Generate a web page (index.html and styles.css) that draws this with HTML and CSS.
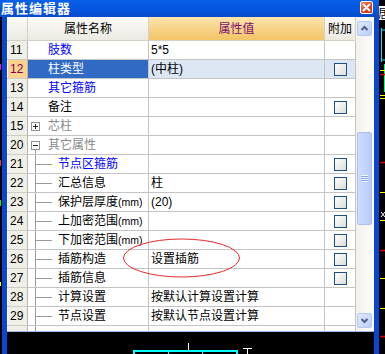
FILE: index.html
```html
<!DOCTYPE html>
<html lang="zh">
<head>
<meta charset="utf-8">
<title>属性编辑器</title>
<link rel="stylesheet" href="styles.css">
</head>
<body>
<div class="screen">
  <svg class="cad" width="385" height="354" viewBox="0 0 385 354">
    <rect x="379" y="6" width="6" height="14" fill="#fff"/>
    <text x="378" y="18" font-size="12" font-family="Noto Sans CJK SC, sans-serif" fill="#000">居</text>
    <path d="M381.5 28 V62 M381.5 30 H385 M381.5 60 H385" stroke="#00e0ff" stroke-width="1" fill="none"/>
    <path d="M384.5 64 V92" stroke="#00ff80" stroke-width="1"/>
    <path d="M380 70.5 H385 M380 95.5 H385 M380 98.5 H385 M380 192.5 H385 M380 220.5 H385 M380 278.5 H385 M380 308.5 H385" stroke="#ffff00" stroke-width="1"/>
    <path d="M380 74.5 H385 M380 162.5 H385 M380 250.5 H385 M380 336.5 H385" stroke="#e00000" stroke-width="1.5"/>
    <path d="M381 212 L385 217 M385 212 L381 217" stroke="#fff" stroke-width="1"/>
    <path d="M0.5 64 V70" stroke="#ff00ff" stroke-width="1"/>
    <path d="M0.5 160 V166" stroke="#ff3030" stroke-width="1"/>
    <path d="M0.5 200 V206" stroke="#00ff00" stroke-width="1"/>
    <path d="M0.5 282 V286" stroke="#ffff00" stroke-width="1"/>
    <path d="M188.5 343 V350" stroke="#fff" stroke-width="1"/>
    <rect x="134" y="351" width="103" height="8" fill="none" stroke="#00ffff" stroke-width="2"/>
    <path d="M168.5 351 V354 M202.5 351 V354" stroke="#00ffff" stroke-width="1"/>
    <path d="M243 348.5 H252 M247.5 348 V354" stroke="#fff" stroke-width="1"/>
  </svg>

  <div class="win">
    <div class="title">
      <span class="title-text">属性编辑器</span>
      <span class="close">
        <svg width="13" height="13" viewBox="0 0 13 13"><path d="M3.5 3.5 L9.5 9.5 M9.5 3.5 L3.5 9.5" stroke="#fff" stroke-width="2" stroke-linecap="round"/></svg>
      </span>
    </div>
    <div class="frame">
      <div class="content">
        <div class="grid">
          <div class="row head">
            <div class="cell num"></div>
            <div class="cell name">属性名称</div>
            <div class="cell val">属性值</div>
            <div class="cell ext">附加</div>
          </div>

          <div class="row">
            <div class="cell num">11</div>
            <div class="cell name blue">肢数</div>
            <div class="cell val">5*5</div>
            <div class="cell ext"></div>
          </div>
          <div class="row sel">
            <div class="cell num">12</div>
            <div class="cell name">柱类型</div>
            <div class="cell val">(中柱)</div>
            <div class="cell ext"><span class="cb"></span></div>
          </div>
          <div class="row">
            <div class="cell num">13</div>
            <div class="cell name blue">其它箍筋</div>
            <div class="cell val"></div>
            <div class="cell ext"></div>
          </div>
          <div class="row">
            <div class="cell num">14</div>
            <div class="cell name">备注</div>
            <div class="cell val"></div>
            <div class="cell ext"><span class="cb"></span></div>
          </div>
          <div class="row">
            <div class="cell num">15</div>
            <div class="cell name grp gray"><span class="exp plus"></span>芯柱</div>
            <div class="cell val"></div>
            <div class="cell ext"></div>
          </div>
          <div class="row">
            <div class="cell num">20</div>
            <div class="cell name grp open gray"><span class="exp"></span>其它属性</div>
            <div class="cell val"></div>
            <div class="cell ext"></div>
          </div>
          <div class="row">
            <div class="cell num">21</div>
            <div class="cell name br blue">节点区箍筋</div>
            <div class="cell val"></div>
            <div class="cell ext"><span class="cb"></span></div>
          </div>
          <div class="row">
            <div class="cell num">22</div>
            <div class="cell name br">汇总信息</div>
            <div class="cell val">柱</div>
            <div class="cell ext"><span class="cb"></span></div>
          </div>
          <div class="row">
            <div class="cell num">23</div>
            <div class="cell name br">保护层厚度<span class="mm">(mm)</span></div>
            <div class="cell val">(20)</div>
            <div class="cell ext"><span class="cb"></span></div>
          </div>
          <div class="row">
            <div class="cell num">24</div>
            <div class="cell name br">上加密范围<span class="mm">(mm)</span></div>
            <div class="cell val"></div>
            <div class="cell ext"><span class="cb"></span></div>
          </div>
          <div class="row">
            <div class="cell num">25</div>
            <div class="cell name br">下加密范围<span class="mm">(mm)</span></div>
            <div class="cell val"></div>
            <div class="cell ext"><span class="cb"></span></div>
          </div>
          <div class="row">
            <div class="cell num">26</div>
            <div class="cell name br">插筋构造</div>
            <div class="cell val">设置插筋</div>
            <div class="cell ext"><span class="cb"></span></div>
          </div>
          <div class="row">
            <div class="cell num">27</div>
            <div class="cell name br">插筋信息</div>
            <div class="cell val"></div>
            <div class="cell ext"><span class="cb"></span></div>
          </div>
          <div class="row">
            <div class="cell num">28</div>
            <div class="cell name br">计算设置</div>
            <div class="cell val">按默认计算设置计算</div>
            <div class="cell ext"></div>
          </div>
          <div class="row">
            <div class="cell num">29</div>
            <div class="cell name br">节点设置</div>
            <div class="cell val">按默认节点设置计算</div>
            <div class="cell ext"></div>
          </div>
          <div class="row part">
            <div class="cell num"></div>
            <div class="cell name br"></div>
            <div class="cell val"></div>
            <div class="cell ext"></div>
          </div>
        </div>

        <div class="scroll">
          <span class="sbtn">
            <svg width="13" height="13" viewBox="0 0 13 13"><path d="M3.5 8 L6.5 5 L9.5 8" stroke="#4d6185" stroke-width="2" fill="none"/></svg>
          </span>
          <span class="thumb"><span class="grip"></span></span>
          <span class="sbtn down">
            <svg width="13" height="13" viewBox="0 0 13 13"><path d="M3.5 5 L6.5 8 L9.5 5" stroke="#4d6185" stroke-width="2" fill="none"/></svg>
          </span>
        </div>
      </div>
      <div class="footer"></div>
    </div>
  </div>

  <svg class="mark" width="125" height="46" viewBox="0 0 125 46">
    <ellipse cx="61.5" cy="22" rx="58" ry="19" fill="none" stroke="#e82828" stroke-width="1"/>
  </svg>
</div>
</body>
</html>
```

FILE: styles.css
```css
* { box-sizing: border-box; }

body {
  margin: 0;
  background: #000;
}

.screen {
  position: relative;
  width: 385px;
  height: 354px;
  overflow: hidden;
  background: #000;
  font-family: "Liberation Sans", "Noto Sans CJK SC", sans-serif;
  font-size: 12px;
  color: #000;
}

.cad {
  position: absolute;
  left: 0;
  top: 0;
}

.win {
  position: relative;
  width: 379px;
  height: 354px;
  display: flex;
  flex-direction: column;
}

.title {
  height: 17px;
  flex: none;
  display: flex;
  justify-content: space-between;
  align-items: flex-start;
  background: linear-gradient(#0a60ea, #0553dc 65%, #0a49cc);
  color: #fff;
}

.title-text {
  font-family: "Noto Sans CJK SC", sans-serif;
  font-weight: bold;
  font-size: 13px;
  line-height: 16px;
  height: 16px;
  padding-left: 1px;
  letter-spacing: 1px;
}

.close {
  width: 13px;
  height: 13px;
  margin: 1px 6px 0 0;
  border: 1px solid #fff;
  border-radius: 2px;
  background: linear-gradient(135deg, #f08a6c, #d8421c 60%, #c2350f);
  display: flex;
}

.close svg { margin: -1px; }

.frame {
  flex: 1;
  display: flex;
  flex-direction: column;
  margin-left: 2px;
  border-left: 5px solid #0b46d2;
  border-right: 5px solid #0b46d2;
}

.content {
  display: flex;
  height: 315px;
  background: #fff;
  border-bottom: 1px solid #9db9eb;
}

.footer { flex: 1; }

.grid {
  width: 349px;
  overflow: hidden;
}

.row {
  display: grid;
  grid-template-columns: 21px 121px 176px 31px;
  height: 19px;
}

.cell {
  display: flex;
  align-items: center;
  white-space: nowrap;
  overflow: hidden;
  border-right: 1px solid #c4c4c4;
  border-bottom: 1px solid #c4c4c4;
  font-family: "Liberation Sans", "Noto Sans CJK SC", sans-serif;
  font-size: 12px;
  line-height: 14px;
}

.num {
  background: #efeee7;
  padding-left: 3px;
  border-right-color: #b8b6ac;
  border-bottom-color: #cfcdc3;
  box-shadow: inset 1px 0 #fff;
}

.name { padding-left: 20px; }
.val { padding-left: 2px; }
.ext { justify-content: center; }

.head { height: 24px; }
.head .cell {
  justify-content: center;
  padding: 0;
  background: linear-gradient(#fbfbf8, #ebe9e1);
  border-bottom-color: #d4d2c8;
  border-right-color: #d4d2c8;
}
.head .val {
  background: linear-gradient(#fde4ad, #f2c466);
  color: #7a0f6e;
}

.blue { color: #0000ff; }
.gray { color: #8a8a8a; }

.sel .num { background: #fbd290; color: #800050; }
.sel .name { background: #316ac5; color: #fff; }
.sel .val, .sel .ext { background: #dde7f4; }

.grp { padding-left: 3px; }
.open {
  background: linear-gradient(#9a9a9a, #9a9a9a) 7px 14px / 1px 5px no-repeat;
}

.exp {
  width: 9px;
  height: 9px;
  margin-right: 8px;
  flex: none;
  border: 1px solid #8c9398;
  background: linear-gradient(#222, #222) center / 5px 1px no-repeat, #fff;
}
.exp.plus {
  background: linear-gradient(#222, #222) center / 5px 1px no-repeat,
              linear-gradient(#222, #222) center / 1px 5px no-repeat, #fff;
}

.br {
  padding-left: 30px;
  background: linear-gradient(#9a9a9a, #9a9a9a) 7px 0 / 1px 100% no-repeat,
              linear-gradient(#9a9a9a, #9a9a9a) 8px 9px / 16px 1px no-repeat;
}

.mm {
  font-size: 10.5px;
}

.part { height: 5px; }
.part .cell { border-bottom: 0; }

.cb {
  width: 13px;
  height: 13px;
  border: 1px solid #1c5180;
  background: linear-gradient(135deg, #ffffff, #dcdcd6);
}

.scroll {
  width: 18px;
  display: flex;
  flex-direction: column;
  padding: 4px 2px 3px 1px;
  background: linear-gradient(90deg, #f3f1eb, #fdfdfb);
}

.sbtn {
  width: 15px;
  height: 15px;
  flex: none;
  display: flex;
  border: 1px solid #b6c9f4;
  border-radius: 2px;
  background: linear-gradient(135deg, #e0e9fe, #bacef8);
}
.sbtn.down { margin-top: auto; }

.thumb {
  width: 15px;
  height: 93px;
  margin-top: 96px;
  flex: none;
  display: flex;
  align-items: center;
  justify-content: center;
  border: 1px solid #a9bff0;
  border-radius: 2px;
  background: linear-gradient(90deg, #cfdcfd, #b8cbf8);
}

.grip {
  width: 7px;
  height: 7px;
  background: repeating-linear-gradient(#eef3ff 0 1px, #8ea6dc 1px 2px);
}

.mark {
  position: absolute;
  left: 120px;
  top: 236px;
}
```
